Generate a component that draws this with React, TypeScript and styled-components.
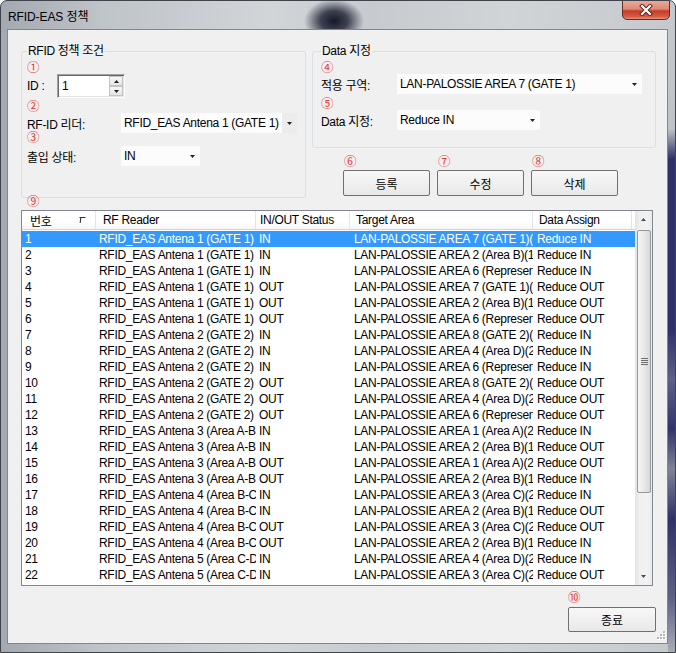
import React from "react";
import styled, { createGlobalStyle } from "styled-components";

const FONT = `"Liberation Sans", "Noto Sans CJK KR", sans-serif`;

const GlobalStyle = createGlobalStyle`
  html, body { margin: 0; padding: 0; background: #ffffff; overflow: hidden; }
  body { font-family: ${FONT}; }
`;

const Frame = styled.div`
  width: 676px;
  height: 653px;
  box-sizing: border-box;
  border: 1px solid #3f444b;
  border-radius: 7px 7px 0 0;
  display: flex;
  flex-direction: column;
  overflow: hidden;
  font-family: ${FONT};
  background-image:
    radial-gradient(ellipse 30px 22px at 333px 20px, rgba(14, 18, 36, 0.97) 0%, rgba(14, 18, 36, 0.75) 45%, rgba(14, 18, 36, 0) 100%),
    linear-gradient(to right, #a3a9b0 0%, #bfc4c9 15%, #d2d5d8 40%, #c7cace 55%, #d1d4d7 75%, #c5c9cd 100%);
`;

const TitleBar = styled.div`
  height: 28px;
  flex: none;
  display: flex;
  align-items: center;
  justify-content: space-between;
  padding: 0 5px 0 7px;
`;

const Title = styled.span`
  font-size: 12px;
  color: #000;
  letter-spacing: -0.1px;
`;

const CloseBtn = styled.div`
  align-self: flex-start;
  margin-top: -1px;
  width: 48px;
  height: 20px;
  box-sizing: border-box;
  border: 1px solid #6b2a20;
  border-radius: 0 0 5px 5px;
  background: linear-gradient(to bottom, #eaa898 0%, #dc8a77 45%, #c53d27 55%, #d35a42 85%, #e4917c 100%);
  display: flex;
  align-items: center;
  justify-content: center;
`;

const WindowBody = styled.div`
  flex: 1;
  display: flex;
  min-height: 0;
`;

const RightEdge = styled.div`
  width: 7px;
  flex: none;
  background: linear-gradient(to bottom, #c4c7cc 0px, #bfc2c7 100px, #2f306a 130px, #2f306a 300px, #5d6088 350px, #32336a 400px, #7f8298 440px, #303168 490px, #5f6286 570px, #a9acb5 100%);
`;

const Client = styled.div`
  flex: 1;
  min-width: 0;
  position: relative;
  margin: 0 0 8px 6px;
  border: 1px solid #7d8791;
  background: #f0f0f0;
  padding: 13px 11px 0 13px;
  display: flex;
  flex-direction: column;
  font-size: 12px;
  letter-spacing: -0.3px;
  color: #000;
`;

const TopSection = styled.div`
  display: flex;
  gap: 6px;
  align-items: flex-start;
`;

const GroupBox = styled.fieldset<{ $w: number; $pl: number; $pb: number }>`
  margin: 0;
  min-width: 0;
  width: ${(p) => p.$w}px;
  box-sizing: border-box;
  padding: 1px 0 ${(p) => p.$pb}px ${(p) => p.$pl}px;
  border: 1px solid #d5dfe5;
  border-radius: 3px;
`;

const Legend = styled.legend`
  padding: 0 1px;
  line-height: 16px;
  font-size: 12px;
`;

const Mark = styled.div<{ $mt?: number; $ml?: number }>`
  height: 14px;
  line-height: 14px;
  font-size: 12.5px;
  letter-spacing: 0;
  color: #e23c36;
  font-family: "Noto Sans CJK KR", sans-serif;
  margin-top: ${(p) => p.$mt ?? 0}px;
  margin-left: ${(p) => p.$ml ?? 0}px;
`;

const FieldRow = styled.div<{ $h: number; $mt?: number }>`
  display: flex;
  align-items: center;
  height: ${(p) => p.$h}px;
  margin-top: ${(p) => p.$mt ?? 0}px;
`;

const Label = styled.span<{ $w: number }>`
  width: ${(p) => p.$w}px;
  flex: none;
  white-space: nowrap;
`;

const Spin = styled.div`
  width: 68px;
  height: 24px;
  box-sizing: border-box;
  display: flex;
  background: #fff;
  border: 1px solid;
  border-color: #a0a0a0 #ffffff #ffffff #a0a0a0;
  box-shadow: inset 1px 1px 0 #696969, inset -1px -1px 0 #e3e3e3;
`;

const SpinValue = styled.span`
  flex: 1;
  padding: 3px 0 0 4px;
  line-height: 16px;
`;

const SpinButtons = styled.div`
  width: 14px;
  display: flex;
  flex-direction: column;
  padding: 1px 1px 1px 0;
`;

const SpinBtn = styled.div`
  flex: 1;
  border: 1px solid #c3c3c3;
  background: linear-gradient(#f7f7f7, #e6e6e6);
  display: flex;
  align-items: center;
  justify-content: center;
`;

const Combo = styled.div<{ $w: number }>`
  width: ${(p) => p.$w}px;
  height: 20px;
  box-sizing: border-box;
  background: #fcfcfc;
  display: flex;
  align-items: center;
  padding-left: 3px;
`;

const ComboText = styled.span`
  flex: 1;
  white-space: nowrap;
  overflow: hidden;
`;

const ComboArrow = styled.span<{ $shade?: boolean }>`
  width: 15px;
  align-self: stretch;
  flex: none;
  display: flex;
  align-items: center;
  justify-content: center;
  background: ${(p) => (p.$shade ? "#ececec" : "transparent")};
`;

const RightCol = styled.div`
  display: flex;
  flex-direction: column;
`;

const ButtonRow = styled.div`
  display: flex;
  gap: 7px;
  padding-left: 31px;
  margin-top: 6px;
`;

const ButtonCol = styled.div`
  display: flex;
  flex-direction: column;
`;

const Button = styled.div<{ $w: number; $h: number; $mt: number }>`
  width: ${(p) => p.$w}px;
  height: ${(p) => p.$h}px;
  margin-top: ${(p) => p.$mt}px;
  box-sizing: border-box;
  border: 1px solid #707070;
  border-radius: 2px;
  background: linear-gradient(#f7f7f7, #f0f0f0 50%, #e8e8e8);
  display: flex;
  align-items: center;
  justify-content: center;
  font-size: 12px;
  letter-spacing: 0;
`;

const COLS = "74px 160px 94px 183px 99px";

const List = styled.div`
  margin-top: 2px;
  width: 632px;
  height: 376px;
  box-sizing: border-box;
  border: 1px solid #828790;
  background: #fff;
  display: flex;
  overflow: hidden;
`;

const ListMain = styled.div`
  flex: 1;
  min-width: 0;
  display: flex;
  flex-direction: column;
`;

const HeaderRow = styled.div`
  display: grid;
  grid-template-columns: ${COLS};
  height: 19px;
  flex: none;
  box-sizing: border-box;
  border-bottom: 1px solid #d5d5d5;
  background: linear-gradient(#ffffff, #ffffff 55%, #f6f7f9);
`;

const HeaderCell = styled.div<{ $pl: number }>`
  padding-left: ${(p) => p.$pl}px;
  padding-right: 9px;
  border-right: 1px solid #e3e5e8;
  display: flex;
  align-items: center;
  justify-content: space-between;
  white-space: nowrap;
  overflow: hidden;
`;

const Body = styled.div`
  padding-top: 1px;
`;

const Row = styled.div<{ $sel?: boolean }>`
  display: grid;
  grid-template-columns: ${COLS};
  height: 16px;
  line-height: 16px;
  background: ${(p) => (p.$sel ? "#3399ff" : "transparent")};
  color: ${(p) => (p.$sel ? "#ffffff" : "#000000")};
`;

const Cell = styled.div<{ $pl: number }>`
  padding-left: ${(p) => p.$pl}px;
  white-space: nowrap;
  overflow: hidden;
`;

const VScroll = styled.div`
  width: 17px;
  flex: none;
  display: flex;
  flex-direction: column;
  background: linear-gradient(to right, #e2e2e2 0, #f0f0f0 25%, #f2f2f2 75%, #e9e9e9 100%);
`;

const ScrollBtn = styled.div`
  height: 17px;
  flex: none;
  display: flex;
  align-items: center;
  justify-content: center;
`;

const Track = styled.div`
  flex: 1;
`;

const Thumb = styled.div`
  height: 263px;
  margin: 2px 1px 0 2px;
  box-sizing: border-box;
  border: 1px solid #989898;
  border-radius: 2px;
  background: linear-gradient(to right, #f5f5f5, #e8e8e8 50%, #d8d8d8);
  display: flex;
  align-items: center;
  justify-content: center;
`;

const BottomCol = styled.div`
  align-self: flex-end;
  display: flex;
  flex-direction: column;
  margin-top: 4px;
`;

const Grip = styled.div`
  position: absolute;
  right: 1px;
  bottom: 1px;
  width: 12px;
  height: 12px;
`;

const Tri = ({ up, color = "#222" }: { up?: boolean; color?: string }) => (
  <svg width="5" height="3" viewBox="0 0 5 3">
    <path d={up ? "M0 3h5L2.5 0z" : "M0 0h5L2.5 3z"} fill={color} />
  </svg>
);

const SortIcon = () => (
  <svg width="7" height="8" viewBox="0 0 7 8">
    <path d="M0.5 1.5H6.5M1.8 1.5L1.2 7" stroke="#333" strokeWidth="1.1" fill="none" />
  </svg>
);

const CloseX = () => (
  <svg width="14" height="12" viewBox="0 0 14 12">
    <path d="M3 2L11 10M11 2L3 10" stroke="#5b1d14" strokeWidth="4" strokeLinecap="square" />
    <path d="M3 2L11 10M11 2L3 10" stroke="#ffffff" strokeWidth="2.2" strokeLinecap="square" />
  </svg>
);

const GripIcon = () => (
  <svg width="12" height="12" viewBox="0 0 12 12">
    {[
      [9, 1],
      [6, 4],
      [9, 4],
      [3, 7],
      [6, 7],
      [9, 7],
    ].map(([x, y], i) => (
      <g key={i}>
        <rect x={x + 1} y={y + 1} width="2" height="2" fill="#ffffff" />
        <rect x={x} y={y} width="2" height="2" fill="#b8b8b8" />
      </g>
    ))}
  </svg>
);

const ThumbGrip = () => (
  <svg width="7" height="8" viewBox="0 0 7 8">
    {[0, 2, 4, 6].map((y) => (
      <rect key={y} x="0" y={y} width="7" height="1" fill="#6f6f6f" />
    ))}
  </svg>
);

const R1 = "RFID_EAS Antena 1 (GATE 1)";
const R2 = "RFID_EAS Antena 2 (GATE 2)";
const R3 = "RFID_EAS Antena 3 (Area A-B)";
const R4 = "RFID_EAS Antena 4 (Area B-C)";
const R5 = "RFID_EAS Antena 5 (Area C-D)";
const A1 = "LAN-PALOSSIE AREA 1 (Area A)(2F)";
const A2 = "LAN-PALOSSIE AREA 2 (Area B)(1F)";
const A3 = "LAN-PALOSSIE AREA 3 (Area C)(2F)";
const A4 = "LAN-PALOSSIE AREA 4 (Area D)(2F)";
const A6 = "LAN-PALOSSIE AREA 6 (Representative)";
const A7 = "LAN-PALOSSIE AREA 7 (GATE 1)(1F)";
const A8 = "LAN-PALOSSIE AREA 8 (GATE 2)(1F)";

const ROWS: [string, string, string, string][] = [
  [R1, "IN", A7, "Reduce IN"],
  [R1, "IN", A2, "Reduce IN"],
  [R1, "IN", A6, "Reduce IN"],
  [R1, "OUT", A7, "Reduce OUT"],
  [R1, "OUT", A2, "Reduce OUT"],
  [R1, "OUT", A6, "Reduce OUT"],
  [R2, "IN", A8, "Reduce IN"],
  [R2, "IN", A4, "Reduce IN"],
  [R2, "IN", A6, "Reduce IN"],
  [R2, "OUT", A8, "Reduce OUT"],
  [R2, "OUT", A4, "Reduce OUT"],
  [R2, "OUT", A6, "Reduce OUT"],
  [R3, "IN", A1, "Reduce IN"],
  [R3, "IN", A2, "Reduce OUT"],
  [R3, "OUT", A1, "Reduce OUT"],
  [R3, "OUT", A2, "Reduce IN"],
  [R4, "IN", A3, "Reduce IN"],
  [R4, "IN", A2, "Reduce OUT"],
  [R4, "OUT", A3, "Reduce OUT"],
  [R4, "OUT", A2, "Reduce IN"],
  [R5, "IN", A4, "Reduce IN"],
  [R5, "IN", A3, "Reduce OUT"],
];

const HEADERS: { t: string; pl: number; sort?: boolean }[] = [
  { t: "번호", pl: 8, sort: true },
  { t: "RF Reader", pl: 7 },
  { t: "IN/OUT Status", pl: 4 },
  { t: "Target Area", pl: 6 },
  { t: "Data Assign", pl: 6 },
];

const CELL_PAD = [3, 3, 3, 4, 4];

export default function App() {
  return (
    <>
      <GlobalStyle />
      <Frame>
        <TitleBar>
          <Title>RFID-EAS 정책</Title>
          <CloseBtn>
            <CloseX />
          </CloseBtn>
        </TitleBar>
        <WindowBody>
          <Client>
            <TopSection>
              <GroupBox $w={285} $pl={5} $pb={31}>
                <Legend>RFID 정책 조건</Legend>
                <Mark>①</Mark>
                <FieldRow $h={24}>
                  <Label $w={30}>ID :</Label>
                  <Spin>
                    <SpinValue>1</SpinValue>
                    <SpinButtons>
                      <SpinBtn>
                        <Tri up />
                      </SpinBtn>
                      <SpinBtn>
                        <Tri />
                      </SpinBtn>
                    </SpinButtons>
                  </Spin>
                </FieldRow>
                <Mark $mt={1}>②</Mark>
                <FieldRow $h={20}>
                  <Label $w={94}>RF-ID 리더:</Label>
                  <Combo $w={176}>
                    <ComboText>RFID_EAS Antena 1 (GATE 1)</ComboText>
                    <ComboArrow $shade>
                      <Tri />
                    </ComboArrow>
                  </Combo>
                </FieldRow>
                <Mark $mt={-3}>③</Mark>
                <FieldRow $h={20} $mt={2}>
                  <Label $w={94}>출입 상태:</Label>
                  <Combo $w={79}>
                    <ComboText>IN</ComboText>
                    <ComboArrow>
                      <Tri />
                    </ComboArrow>
                  </Combo>
                </FieldRow>
              </GroupBox>
              <RightCol>
                <GroupBox $w={344} $pl={8} $pb={17}>
                  <Legend>Data 지정</Legend>
                  <Mark>④</Mark>
                  <FieldRow $h={20}>
                    <Label $w={76}>적용 구역:</Label>
                    <Combo $w={245}>
                      <ComboText>LAN-PALOSSIE AREA 7 (GATE 1)</ComboText>
                      <ComboArrow>
                        <Tri />
                      </ComboArrow>
                    </Combo>
                  </FieldRow>
                  <Mark $mt={2}>⑤</Mark>
                  <FieldRow $h={20}>
                    <Label $w={76}>Data 지정:</Label>
                    <Combo $w={143}>
                      <ComboText>Reduce IN</ComboText>
                      <ComboArrow>
                        <Tri />
                      </ComboArrow>
                    </Combo>
                  </FieldRow>
                </GroupBox>
                <ButtonRow>
                  {[
                    ["⑥", "등록"],
                    ["⑦", "수정"],
                    ["⑧", "삭제"],
                  ].map(([m, t]) => (
                    <ButtonCol key={t}>
                      <Mark $ml={1}>{m}</Mark>
                      <Button $w={87} $h={26} $mt={2}>
                        {t}
                      </Button>
                    </ButtonCol>
                  ))}
                </ButtonRow>
              </RightCol>
            </TopSection>
            <Mark $mt={-4} $ml={6}>
              ⑨
            </Mark>
            <List>
              <ListMain>
                <HeaderRow>
                  {HEADERS.map((h) => (
                    <HeaderCell key={h.t} $pl={h.pl}>
                      <span>{h.t}</span>
                      {h.sort && <SortIcon />}
                    </HeaderCell>
                  ))}
                </HeaderRow>
                <Body>
                  {ROWS.map((r, i) => (
                    <Row key={i} $sel={i === 0}>
                      {[String(i + 1), ...r].map((c, j) => (
                        <Cell key={j} $pl={CELL_PAD[j]}>
                          {c}
                        </Cell>
                      ))}
                    </Row>
                  ))}
                </Body>
              </ListMain>
              <VScroll>
                <ScrollBtn>
                  <Tri up color="#4d4d4d" />
                </ScrollBtn>
                <Track>
                  <Thumb>
                    <ThumbGrip />
                  </Thumb>
                </Track>
                <ScrollBtn>
                  <Tri color="#4d4d4d" />
                </ScrollBtn>
              </VScroll>
            </List>
            <BottomCol>
              <Mark>⑩</Mark>
              <Button $w={88} $h={25} $mt={3}>
                종료
              </Button>
            </BottomCol>
            <Grip>
              <GripIcon />
            </Grip>
          </Client>
          <RightEdge />
        </WindowBody>
      </Frame>
    </>
  );
}
